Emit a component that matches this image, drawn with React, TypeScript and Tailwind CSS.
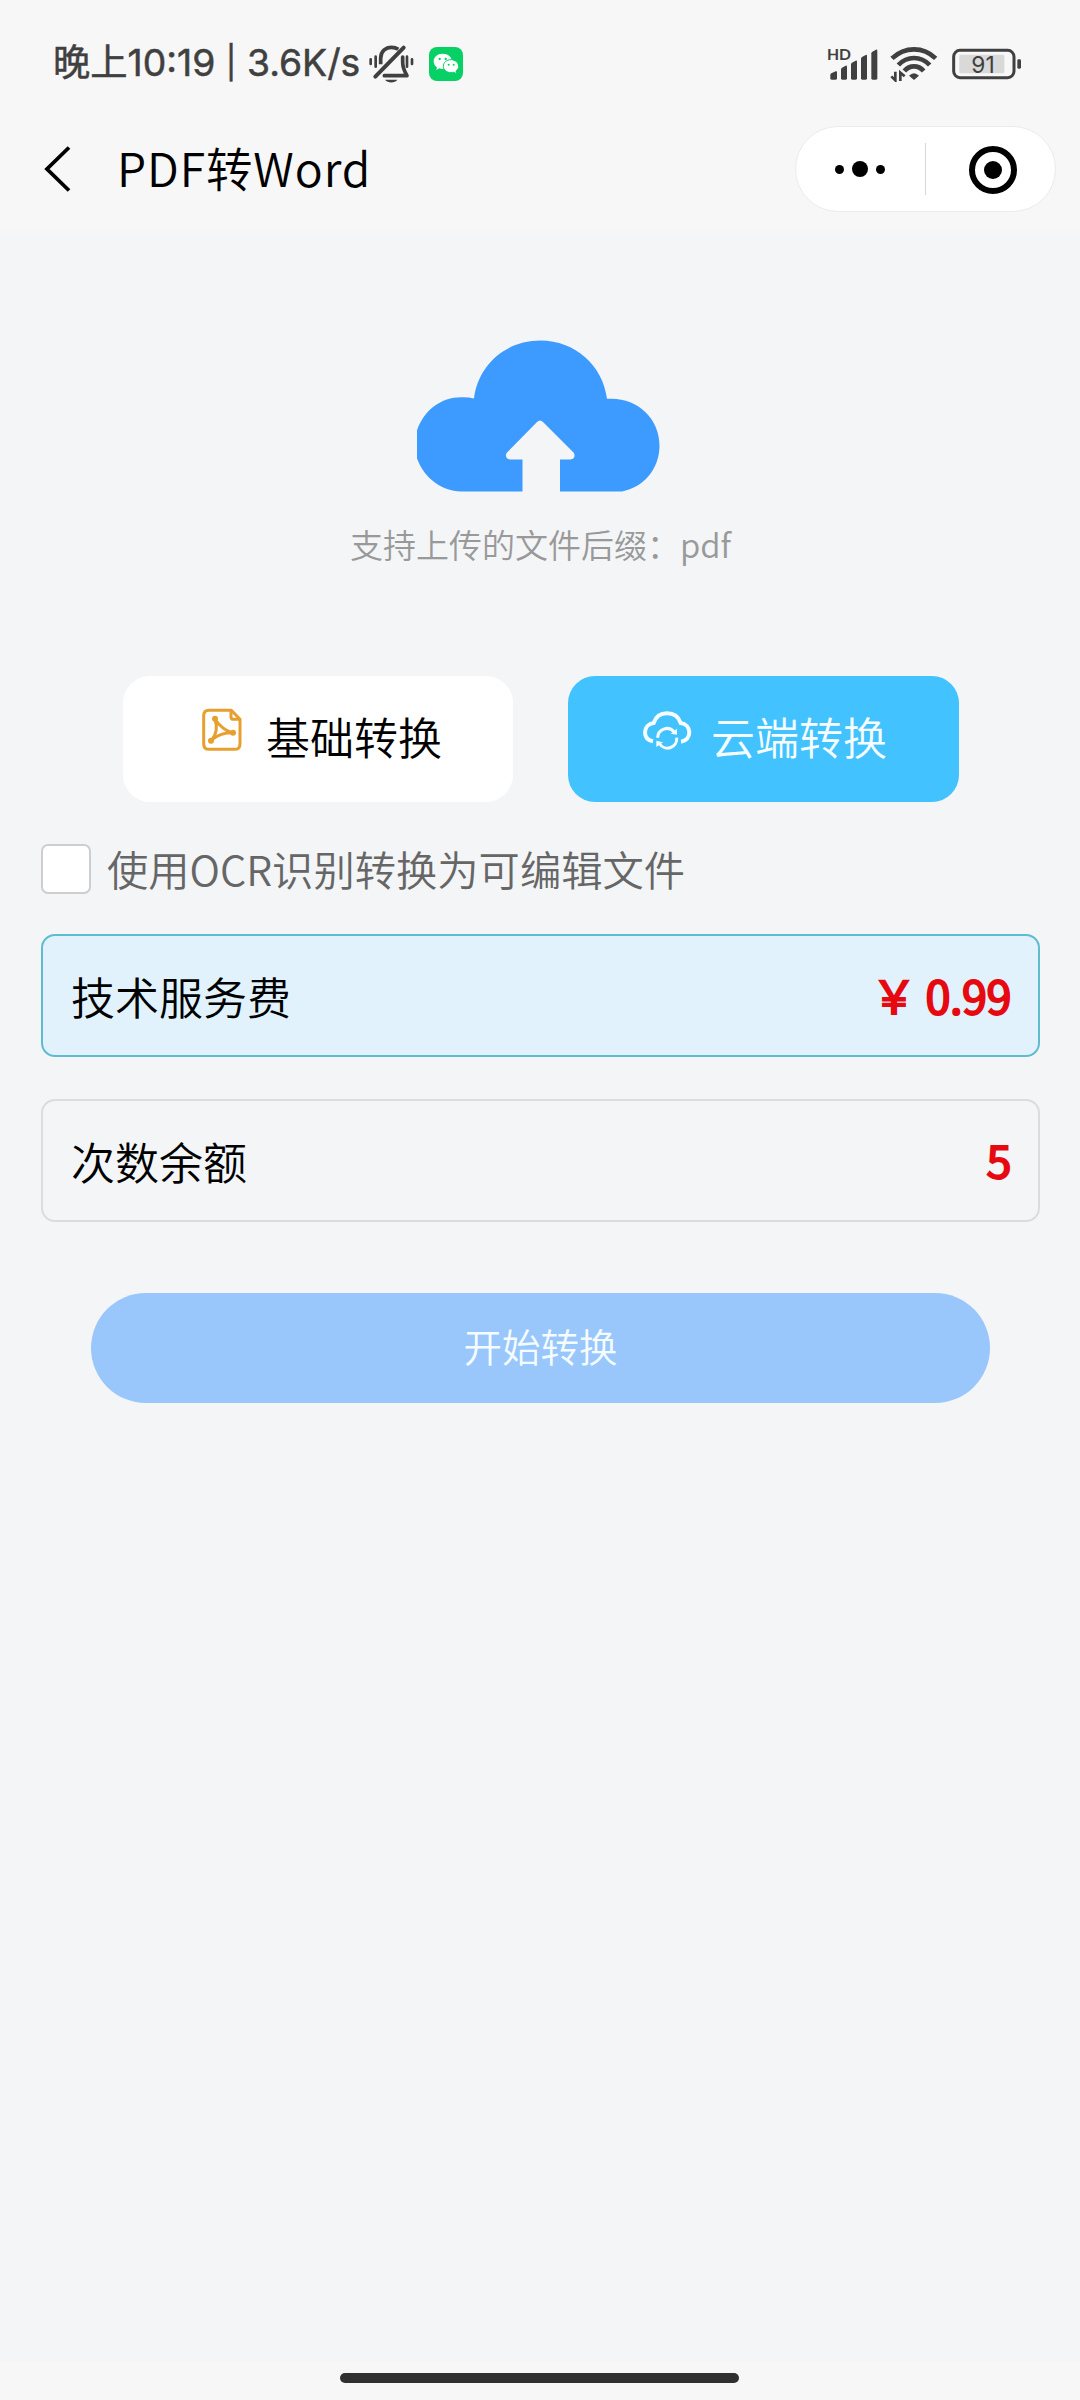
import React, { useState } from 'react';

const BellOffIcon: React.FC = () => (
  <svg width="50" height="42" viewBox="1010 70 150 126" fill="none" stroke="#404040" strokeLinecap="round" strokeLinejoin="round">
    <path d="M1035 171L1120 84" strokeWidth="12" />
    <path d="M1051 134V116C1051 95 1066 83 1084 83C1092 83 1098 85 1104 89" strokeWidth="11" strokeLinecap="butt" />
    <path d="M1117 112V128C1117 145 1122 155 1130 168H1062" strokeWidth="11" />
    <path d="M1021 119V133M1145 119V133M1036 111V141M1130 111V141" strokeWidth="8" />
    <path d="M1064 180H1101C1094 191 1072 191 1064 180Z" fill="#404040" stroke="none" />
  </svg>
);

const WechatIcon: React.FC = () => (
  <svg width="34" height="34" viewBox="1197 81 102 102">
    <rect x="1197" y="81" width="102" height="102" rx="24" fill="#07d064" />
    <path d="M1238 101C1222 101 1211 111 1211 124C1211 132 1215 138 1221 142L1219 150L1228 145C1231 146 1235 147 1238 147C1254 147 1266 137 1266 124C1266 111 1254 101 1238 101Z" fill="#fff" />
    <path d="M1263 119C1249 119 1240 128 1240 139C1240 150 1250 158 1263 158C1266 158 1269 158 1271 157L1280 161L1278 153C1283 150 1286 145 1286 139C1286 128 1276 119 1263 119Z" fill="#fff" stroke="#07d064" strokeWidth="3" />
    <g fill="#07d064">
      <circle cx="1229" cy="117" r="3.5" />
      <circle cx="1247" cy="117" r="3.5" />
      <circle cx="1256" cy="134" r="3" />
      <circle cx="1271" cy="134" r="3" />
    </g>
  </svg>
);

const SignalIcon: React.FC = () => (
  <svg width="52" height="52" viewBox="142 55 156 156" fill="#404040">
    <text x="142" y="120" fontSize="48" fontWeight="700" fontFamily="Lato, sans-serif" textLength="72" lengthAdjust="spacingAndGlyphs">HD</text>
    <path d="M152 166Q152 163 155 161L168 155Q172 154 172 158V176Q172 180 168 180H156Q152 180 152 176Z" />
    <path d="M184 149Q184 146 187 144L198 138Q202 137 202 141V176Q202 180 198 180H188Q184 180 184 176Z" />
    <path d="M214 134Q214 131 217 129L228 123Q232 121 232 126V176Q232 180 228 180H218Q214 180 214 176Z" />
    <path d="M244 117Q244 114 247 112L258 106Q262 104 262 109V176Q262 180 258 180H248Q244 180 244 176Z" />
    <path d="M275 101Q275 98 278 96L289 90Q293 88 293 93V176Q293 180 289 180H279Q275 180 275 176Z" />
  </svg>
);

const WifiIcon: React.FC = () => (
  <svg width="48" height="36" viewBox="330 81 144 108" fill="none" stroke="#404040" strokeWidth="14">
    <path d="M336 118Q365 91 402 91Q439 91 467 118" />
    <path d="M355 138Q375 117 402 117Q429 117 449 138" />
    <path d="M373 156Q385 142 402 142Q419 142 431 156" />
    <path d="M402 183L387 170Q402 155 417 170Z" fill="#404040" stroke="none" />
    <path d="M346 158V184L334 172M361 186V161L374 172" strokeWidth="8" />
  </svg>
);

const BatteryIcon: React.FC = () => (
  <svg width="70" height="32" viewBox="515 84 210 96">
    <rect x="520" y="91" width="181" height="82" rx="19" fill="none" stroke="#404040" strokeWidth="9" />
    <rect x="537" y="104" width="135" height="56" rx="4" fill="#d9d9d9" />
    <rect x="711" y="118" width="11" height="28" rx="4" fill="#404040" />
    <text x="573" y="159" fontSize="70" fill="#404040" fontFamily="Inter, sans-serif" textLength="70" lengthAdjust="spacingAndGlyphs">91</text>
  </svg>
);

const UploadCloud: React.FC = () => (
  <svg width="243" height="152" viewBox="417 340.5 243 152">
    <path
      d="M461 492C442 491 425 480 417 459V431C424 410 442 397 463 397.700Q469 397.700 474 399C478 366 505 341 540.500 341C575 341 603 366 607 399.300C636 397 659.500 418 659.500 446C659.500 470 643 488 622 492Z"
      fill="#3d9bff"
    />
    <path
      d="M522.500 493V460H510C506 460 504.500 455.500 507.500 452.500L537 422.500Q540 419.500 543 422.500L573 452.500C576 455.500 574.500 460 570.500 460H560V493Z"
      fill="#f3f5f7"
    />
  </svg>
);

const PdfIcon: React.FC = () => (
  <svg width="42" height="44" viewBox="302 144 126 132" fill="none" stroke="#e79f2f" strokeWidth="9" strokeLinejoin="round" strokeLinecap="round">
    <path d="M393 151H326Q310 151 310 168V251Q310 268 326 268H403Q419 268 419 251V178Z" />
    <path d="M392 153V170Q392 178 400 178H418" />
    <path d="M344 178Q366 209 395 218Q360 217 334 240Q356 214 344 178Z" strokeWidth="9" />
    <g fill="#e79f2f" stroke="none">
      <circle cx="344" cy="176" r="9" />
      <circle cx="332" cy="242" r="9" />
      <circle cx="398" cy="218" r="9" />
    </g>
  </svg>
);

const CloudSyncIcon: React.FC = () => (
  <svg width="50" height="42" viewBox="275 148 150 126" fill="none" stroke="#f5fdff" strokeWidth="12">
    <path d="M308 245C291 242 284 231 284 218C284 203 295 192 310 190C316 172 331 161 350 161C370 161 385 172 391 190C406 192 417 203 417 218C417 233 407 244 392 246" />
    <path d="M322 234A28 28 0 0 1 371 216" strokeWidth="9" />
    <path d="M379 234A28 28 0 0 1 328 253" strokeWidth="9" />
    <path d="M380 207V225L361 222ZM318 262V243L338 248Z" fill="#f5fdff" stroke="none" />
  </svg>
);

const StatusBar: React.FC = () => (
  <div className="flex h-[126px] items-start justify-between pl-[53px] pr-[58px] pt-[43px] text-[#404040]">
    <div className="flex h-[42px] items-center">
      <span className="w-[314px] whitespace-nowrap font-['Inter','Noto_Sans_CJK_SC',sans-serif] text-[37.300px] leading-[42px] [-webkit-text-stroke:0.5px_#404040]">
        晚上10:19 <span className="relative -top-[2px] text-[32px]">|</span> 3.6K/s
      </span>
      <BellOffIcon />
      <div className="ml-[12px]">
        <WechatIcon />
      </div>
    </div>
    <div className="flex h-[42px] items-center">
      <SignalIcon />
      <div className="ml-[11px]">
        <WifiIcon />
      </div>
      <div className="ml-[14px]">
        <BatteryIcon />
      </div>
    </div>
  </div>
);

const NavBar: React.FC = () => (
  <div className="flex h-[86px] items-center justify-between pl-[42px] pr-[24px]">
    <div className="flex items-center">
      <svg width="30" height="50" viewBox="0 0 30 50" fill="none" stroke="#000" strokeWidth="3.800">
        <path d="M27 3.500L5 25L27 46.500" />
      </svg>
      <h1 className="mb-[4px] ml-[45px] whitespace-nowrap text-[46.500px] font-[350] leading-[60px] tracking-[0.9px] text-black">PDF转Word</h1>
    </div>
    <div className="flex h-[86px] w-[261px] items-center rounded-full border border-[#ebebeb] bg-white">
      <button className="flex flex-1 items-center justify-center gap-[8px] pr-[1px]">
        <span className="size-[9px] rounded-full bg-black" />
        <span className="size-[16px] rounded-full bg-black" />
        <span className="size-[9px] rounded-full bg-black" />
      </button>
      <span className="h-[52px] w-px bg-[#d8d8d8]" />
      <button className="flex w-[129px] items-center justify-center pl-[4px] pt-[2px]">
        <span className="flex size-[48px] items-center justify-center rounded-full border-[6px] border-black">
          <span className="size-[18px] rounded-full bg-black" />
        </span>
      </button>
    </div>
  </div>
);

export default function App() {
  const [useOcr, setUseOcr] = useState(false);

  return (
    <div className="flex h-[2400px] w-[1080px] flex-col overflow-hidden bg-[#f3f5f7] font-['Noto_Sans_CJK_SC',sans-serif]">
      <header className="h-[236px] shrink-0 bg-linear-to-b from-[#f7f7f7] from-96% to-[#f3f5f7]">
        <StatusBar />
        <NavBar />
      </header>

      <main className="flex flex-1 flex-col font-[350]">
        <div className="flex flex-col items-center pt-[104px]">
          <div className="mr-[4px]">
            <UploadCloud />
          </div>
          <p className="mt-[28px] whitespace-nowrap pl-[1px] text-[33px] leading-[48px] text-[#999]">支持上传的文件后缀：pdf</p>
        </div>

        <div className="mt-[108px] flex gap-[55px] pl-[123px]">
          <button className="flex h-[126px] w-[390px] items-center rounded-[27px] bg-white pl-[78px] text-[44px] text-black">
            <div className="mb-[18px]">
              <PdfIcon />
            </div>
            <span className="mb-[6px] ml-[23px] leading-[60px]">基础转换</span>
          </button>
          <button className="flex h-[126px] w-[391px] items-center rounded-[27px] bg-[#42c2ff] pl-[74px] text-[44px] text-[#f5fdff]">
            <div className="mb-[18px]">
              <CloudSyncIcon />
            </div>
            <span className="mb-[6px] ml-[19px] leading-[60px]">云端转换</span>
          </button>
        </div>

        <div className="mt-[42px] flex h-[49px] items-center pl-[41px]">
          <button
            onClick={() => setUseOcr(!useOcr)}
            className={`size-[50px] rounded-[7px] border-2 border-[#cccecf] ${useOcr ? 'bg-[#42c2ff]' : 'bg-white'}`}
          />
          <span className="mb-[2px] ml-[16px] whitespace-nowrap text-[41.300px] leading-[60px] text-[#666]">使用OCR识别转换为可编辑文件</span>
        </div>

        <div className="mt-[41px] flex flex-col gap-[42px] pl-[41px] pr-[40px]">
          <div className="flex h-[123px] items-center justify-between rounded-[14px] border-2 border-[#5dbdcf] bg-[#e1f2fc] pl-[28px] pr-[27px]">
            <span className="text-[44px] text-black">技术服务费</span>
            <span className="mb-[2px] text-[45px] font-normal tracking-[-0.5px] text-[#e60a10] [-webkit-text-stroke:2px_#e60a10]">￥ 0.99</span>
          </div>
          <div className="flex h-[123px] items-center justify-between rounded-[14px] border-2 border-[#dadcde] pl-[28px] pr-[27px]">
            <span className="text-[44px] text-black">次数余额</span>
            <span className="mb-[4px] text-[45px] font-normal tracking-[-0.5px] text-[#e60a10] [-webkit-text-stroke:2px_#e60a10]">5</span>
          </div>
        </div>

        <button className="ml-[91px] mr-[90px] mt-[71px] h-[110px] rounded-full bg-[#9ac7fb] pb-[4px] text-[38.500px] text-[#f5fcff]">开始转换</button>
      </main>

      <footer className="flex h-[38px] shrink-0 justify-center bg-[#f7f7f7] pr-[2px] pt-[11px]">
        <div className="h-[10px] w-[399px] rounded-full bg-[#303030]" />
      </footer>
    </div>
  );
}
